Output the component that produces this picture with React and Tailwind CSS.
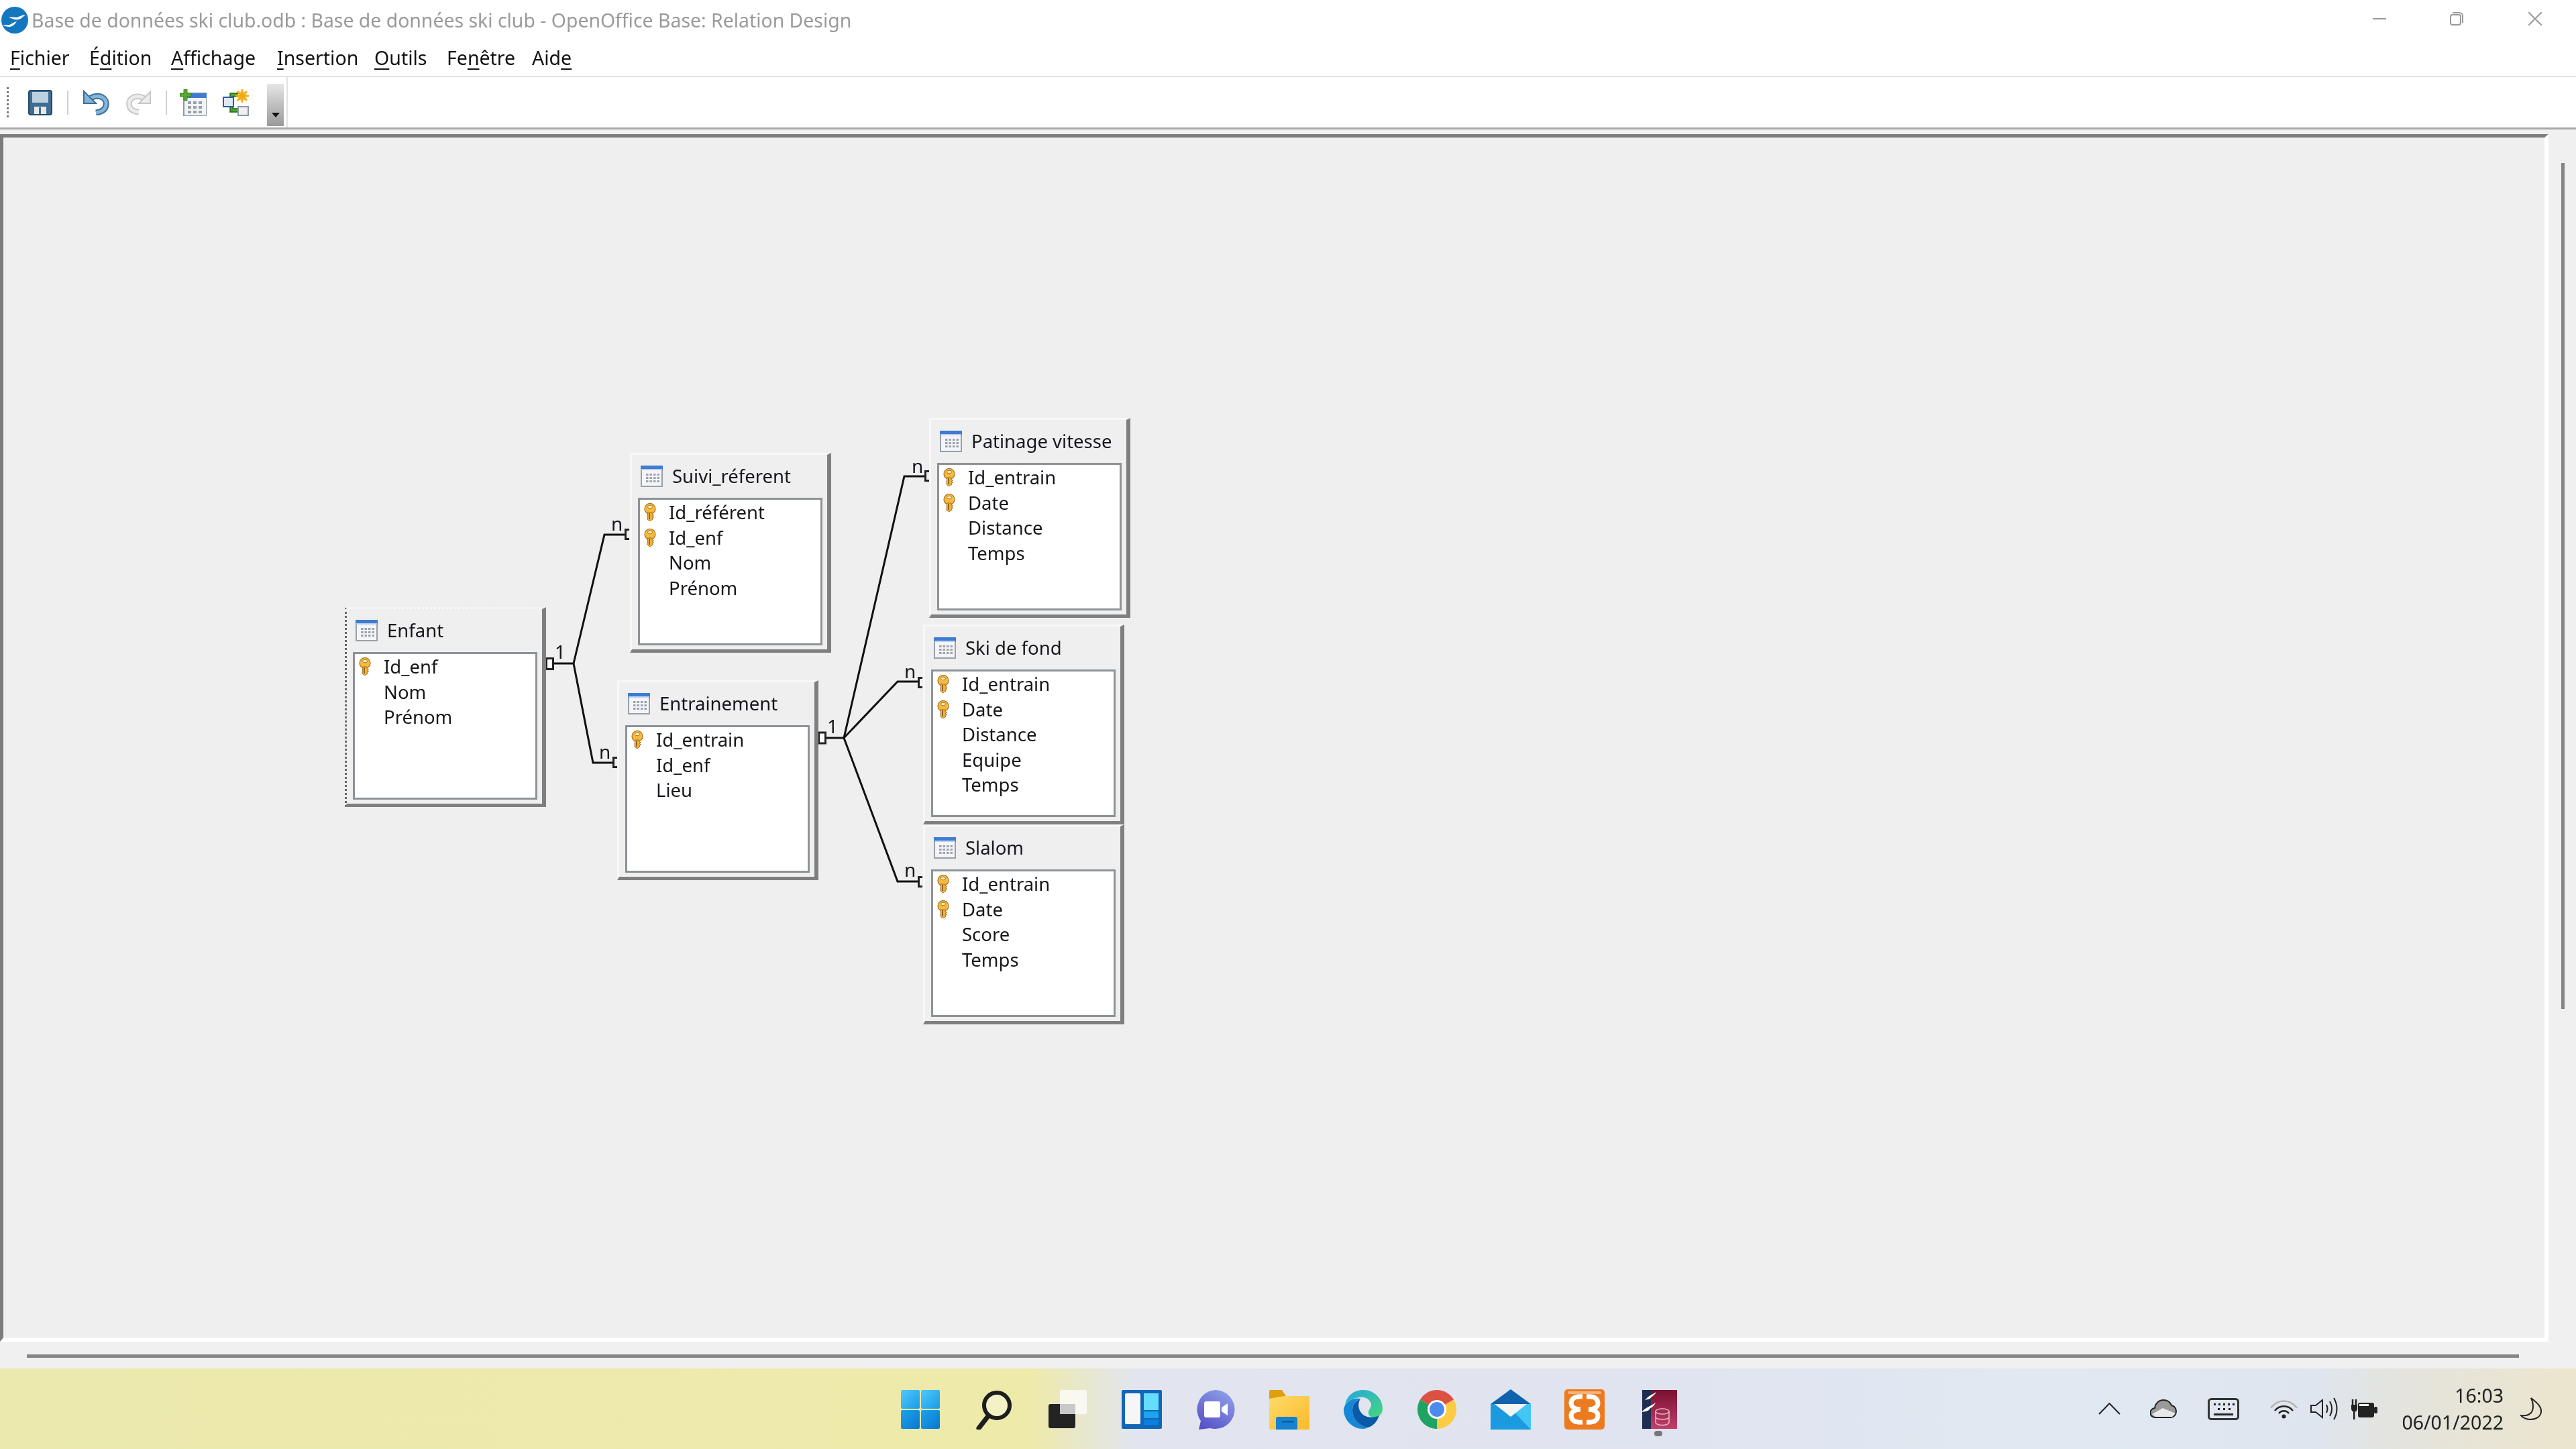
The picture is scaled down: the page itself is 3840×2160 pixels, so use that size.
import React from "react";

const TABLES = [
  { name: "Enfant", x: 515, y: 906, selected: true, rows: [["Id_enf", 1], ["Nom"], ["Prénom"]] },
  { name: "Suivi_réferent", x: 940, y: 676, rows: [["Id_référent", 1], ["Id_enf", 1], ["Nom"], ["Prénom"]] },
  { name: "Entrainement", x: 921, y: 1015, rows: [["Id_entrain", 1], ["Id_enf"], ["Lieu"]] },
  { name: "Patinage vitesse", x: 1386, y: 624, rows: [["Id_entrain", 1], ["Date", 1], ["Distance"], ["Temps"]] },
  { name: "Ski de fond", x: 1377, y: 932, rows: [["Id_entrain", 1], ["Date", 1], ["Distance"], ["Equipe"], ["Temps"]] },
  { name: "Slalom", x: 1377, y: 1230, rows: [["Id_entrain", 1], ["Date", 1], ["Score"], ["Temps"]] },
];

const Key = () => (
  <svg width="18" height="27" viewBox="0 0 18 27" className="shrink-0">
    <circle cx="9" cy="8.500" r="8" fill="#f6b93f" stroke="#a8701a" strokeWidth="1.200" />
    <path d="M5.500 14h6.500v2.500L14.500 18 12 19.500l2.500 1.500-2.500 1.500 1 1.500-4.500 3-3.500-3Z" fill="#f4b23a" stroke="#a8701a" strokeWidth="1" />
    <ellipse cx="9" cy="5.500" rx="3.500" ry="2.300" fill="#fff3c8" stroke="#a9741c" strokeWidth="1" />
    <path d="M8 15v9" stroke="#8a5e1a" strokeWidth="1.800" />
  </svg>
);

const TableIcon = () => (
  <svg width="33" height="32" viewBox="0 0 33 32" className="shrink-0">
    <rect x="1" y="1" width="31" height="30" fill="#f5f5f8" stroke="#97a0aa" strokeWidth="2" />
    <rect x="0" y="0" width="33" height="7" fill="#3f7bd1" />
    <rect x="1" y="5" width="31" height="2" fill="#bcd0ec" />
    {[8, 13.5, 19, 24.5].map((x) =>
      [12, 17, 22].map((y) => <rect key={x + "-" + y} x={x} y={y} width="3.500" height="3" fill="#9aa3ad" />)
    )}
  </svg>
);

function DbTable({ t }) {
  return (
    <div
      className={
        "absolute w-[300px] h-[298px] border-t-[3px] border-l-[3px] border-r-[6px] border-b-[5px] border-t-[#f8f8f8] border-r-[#7f7f7f] border-b-[#7f7f7f] bg-[#efefef] " +
        (t.selected ? "border-l-[#666666] [border-left-style:dotted] [border-top-style:dotted]" : "border-l-[#f8f8f8]")
      }
      style={{ left: t.x - 6, top: t.y - 206 }}
    >
      <div className="h-[64px] flex items-center pl-[13px] gap-[14px] text-[27.500px] text-[#16161c]">
        <TableIcon />
        <span>{t.name}</span>
      </div>
      <div className="ml-[9px] w-[275px] h-[220px] bg-white border-[3px] border-[#8d9297]">
        {t.rows.map(([label, k]) => (
          <div key={label} className="h-[37.500px] flex items-center pl-[6px] gap-[19px] text-[27.500px] text-[#16161c]">
            {k ? <Key /> : <span className="w-[18px] shrink-0" />}
            <span>{label}</span>
          </div>
        ))}
      </div>
    </div>
  );
}

const LINKS = [
  "M824 989H855L901 797H931",
  "M855 989L884 1137H913",
  "M1230 1100H1258L1348 710H1378",
  "M1258 1100L1338 1016H1368",
  "M1258 1100L1338 1314H1368",
];

function Relations() {
  const labels = [
    ["1", 827, 982], ["n", 911, 791], ["n", 893, 1131],
    ["1", 1233, 1093], ["n", 1359, 705], ["n", 1348, 1011], ["n", 1348, 1307],
  ];
  const brackets = [[931, 788, 17], [913, 1128, 17], [1378, 701, 17], [1368, 1009, 17], [1368, 1306, 17]];
  return (
    <svg className="absolute left-0 top-0" width="1800" height="1600" fill="none">
      <g transform="translate(-5 -205)">
        {LINKS.map((d) => <path key={d} d={d} stroke="#111" strokeWidth="3" />)}
        <rect x="814.500" y="981.500" width="10" height="16" fill="#fff" stroke="#222" strokeWidth="3" />
        <rect x="1220.500" y="1092" width="10" height="16" fill="#fff" stroke="#222" strokeWidth="3" />
        {brackets.map(([x, y, h]) => (
          <path key={x + "" + y} d={`M${x + 7} ${y + 1.5}H${x + 1.5}V${y + h - 1.5}H${x + 7}`} stroke="#222" strokeWidth="3" />
        ))}
        {labels.map(([l, x, y], i) => (
          <text key={i} x={x} y={y} fontSize="28" fill="#16161c" fontFamily="'Noto Sans', sans-serif">{l}</text>
        ))}
      </g>
    </svg>
  );
}

const U = ({ children }) => <span className="underline underline-offset-[5px]">{children}</span>;

const MENU = [
  { x: 15, w: 88, c: <><U>F</U>ichier</> },
  { x: 133, w: 91, c: <>É<U>d</U>ition</> },
  { x: 255, w: 128, c: <><U>A</U>ffichage</> },
  { x: 413, w: 113, c: <><U>I</U>nsertion</> },
  { x: 558, w: 76, c: <><U>O</U>utils</> },
  { x: 666, w: 97, c: <>Fe<U>n</U>être</> },
  { x: 793, w: 59, c: <>Aid<U>e</U></> },
];

const Win = () => (
  <svg width="60" height="60" viewBox="0 0 60 60">
    <defs>
      <linearGradient id="w1" x1="0" y1="0" x2="1" y2="1"><stop offset="0" stopColor="#4fc8fb" /><stop offset="1" stopColor="#1a9be6" /></linearGradient>
      <linearGradient id="w2" x1="0" y1="0" x2="1" y2="1"><stop offset="0" stopColor="#1ea3ea" /><stop offset="1" stopColor="#0878d0" /></linearGradient>
    </defs>
    <rect x="1" y="1" width="28" height="28" rx="2" fill="url(#w1)" />
    <rect x="31" y="1" width="28" height="28" rx="2" fill="url(#w1)" />
    <rect x="1" y="31" width="28" height="28" rx="2" fill="url(#w2)" />
    <rect x="31" y="31" width="28" height="28" rx="2" fill="url(#w2)" />
  </svg>
);
const Search = () => (
  <svg width="60" height="60" viewBox="0 0 60 60" fill="none" stroke="#1d1d1d">
    <circle cx="34" cy="24" r="19" strokeWidth="6" fill="#ffffff55" />
    <path d="M21 40L7 58" strokeWidth="7" strokeLinecap="round" />
  </svg>
);
const TaskView = () => (
  <svg width="60" height="60" viewBox="0 0 60 60">
    <rect x="1" y="22" width="40" height="36" rx="3" fill="#232323" />
    <rect x="18" y="1" width="40" height="36" rx="3" fill="#ffffff" fillOpacity=".72" />
    <rect x="18" y="22" width="23" height="15" fill="#c8c8c8" />
  </svg>
);
const Widgets = () => (
  <svg width="60" height="60" viewBox="0 0 60 60">
    <rect width="60" height="58" y="1" rx="2" fill="#1266b8" />
    <rect x="5" y="6" width="23" height="46" rx="2" fill="#f6f6f6" />
    <rect x="33" y="6" width="22" height="25" fill="#66dcff" />
    <rect x="33" y="33" width="22" height="10" fill="#1ca4f0" />
    <rect x="33" y="45" width="22" height="8" fill="#0a80e0" />
  </svg>
);
const Chat = () => (
  <svg width="60" height="60" viewBox="0 0 60 60">
    <defs><linearGradient id="c1" x1=".8" y1="0" x2=".2" y2="1"><stop offset="0" stopColor="#8ea0e8" /><stop offset="1" stopColor="#5750c8" /></linearGradient></defs>
    <path d="M30 1a29 29 0 1 1-8 57l-17 2 3-13A29 29 0 0 1 30 1Z" fill="url(#c1)" />
    <rect x="13" y="18" width="24" height="24" rx="3" fill="#fff" />
    <path d="M39 27l9-6v18l-9-6Z" fill="#fff" />
  </svg>
);
const Folder = () => (
  <svg width="60" height="60" viewBox="0 0 60 60">
    <defs><linearGradient id="f1" x1="0" y1="0" x2="1" y2="1"><stop offset="0" stopColor="#ffdb6c" /><stop offset="1" stopColor="#fbb927" /></linearGradient></defs>
    <path d="M0 3a2 2 0 0 1 2-2h17l6 9-2 4H0Z" fill="#dea00d" />
    <path d="M0 14L23 10h35a2 2 0 0 1 2 2v46a2 2 0 0 1-2 2H2a2 2 0 0 1-2-2Z" fill="url(#f1)" />
    <path d="M10 60V44a3 3 0 0 1 3-3h26a3 3 0 0 1 3 3v16Z" fill="#1782cf" />
    <rect x="19" y="47" width="18" height="2.500" fill="#0b5c9e" />
  </svg>
);
const Edge = () => (
  <svg width="60" height="60" viewBox="0 0 60 60">
    <defs><linearGradient id="e1" x1="0" y1="0" x2="1" y2="1"><stop offset="0" stopColor="#26a6e0" /><stop offset="1" stopColor="#45d97a" /></linearGradient></defs>
    <path d="M3 24C5 10 16 1 30 1c17 0 29 13 29 28 0 8-6 13-13 13-6 0-9-4-8-9 2-5 4-6 4-11-2-8-10-11-17-10C14 13 6 18 3 24Z" fill="url(#e1)" />
    <path d="M3 24c5-8 15-12 23-10-8 2-12 10-12 17 0 13 10 24 23 26-3 1.500-5 2-7 2C14 59 1 46 1 30c0-2 1-4 2-6Z" fill="#1487d6" />
    <path d="M37 57C24 55 14 44 14 31c0-7 4-14 12-17-4 6-4 16 2 22 6 7 18 7 26 3-4 11-10 16-17 18Z" fill="#0b5aa8" />
  </svg>
);
const Chrome = () => (
  <svg width="60" height="60" viewBox="0 0 60 60">
    <path d="M30 30L4.900 15.500A29 29 0 0 1 55.100 15.500Z" fill="#dd5144" />
    <path d="M30 30L55.100 15.500A29 29 0 0 1 30 59Z" fill="#fbcb43" />
    <path d="M30 30L30 59A29 29 0 0 1 4.900 15.500Z" fill="#1ea362" />
    <circle cx="30" cy="30" r="14" fill="#fff" />
    <circle cx="30" cy="30" r="11" fill="#4b8bf0" />
  </svg>
);
const Mail = () => (
  <svg width="60" height="60" viewBox="0 0 60 60">
    <path d="M0 22L30 0l30 22v8H0Z" fill="#0f62ad" />
    <rect y="22" width="60" height="38" fill="#1c9ae0" />
    <path d="M60 22v38L24 22Z" fill="#42c6f6" />
    <path d="M6 22h48L30 41Z" fill="#f4f4f4" />
  </svg>
);
const Xampp = () => (
  <svg width="60" height="60" viewBox="0 0 60 60" fill="none">
    <rect width="60" height="60" rx="5" fill="#ec7a1f" />
    <rect x="5" y="3" width="50" height="4" rx="2" fill="#f6b27a" />
    <path d="M27 11C14 10 10 15 10 21c0 5 5 9 14 9-9 0-14 4-14 9 0 6 4 11 17 10M33 11c13-1 17 4 17 10 0 5-5 9-14 9 9 0 14 4 14 9 0 6-4 11-17 10" stroke="#fff" strokeWidth="7" />
  </svg>
);
const Base = () => (
  <svg width="60" height="60" viewBox="0 0 60 60" fill="none">
    <defs><linearGradient id="b1" x1="0" y1="0" x2="0" y2="1"><stop offset="0" stopColor="#7a1030" /><stop offset="1" stopColor="#c0406a" /></linearGradient></defs>
    <path d="M6 1h52v58H6Z" fill="url(#b1)" />
    <path d="M6 1h13v58H6Z" fill="#1f2e50" />
    <path d="M10 16c5-6 11-8 17-12-2 4-5 6-8 8 0 2-4 3-9 4ZM5 34c6-7 14-9 21-14-3 6-6 7-9 9 0 3-6 4-12 5Z" fill="#fff" />
    <g stroke="#e6b8c8" strokeWidth="1.500">
      <ellipse cx="36" cy="33" rx="10" ry="4" />
      <path d="M26 33v16c0 6 20 6 20 0V33M26 41c0 5 20 5 20 0" />
    </g>
  </svg>
);

const TASK = [Win, Search, TaskView, Widgets, Chat, Folder, Edge, Chrome, Mail, Xampp, Base];

export default function App() {
  return (
    <div className="relative w-[3840px] h-[2160px] flex flex-col overflow-hidden bg-[#f0f0f0] font-['Noto_Sans',sans-serif] blur-[0.6px]">
      {/* title bar */}
      <div className="h-[60px] shrink-0 bg-white flex items-center">
        <svg width="42" height="42" viewBox="0 0 42 42" className="ml-[1px] shrink-0">
          <circle cx="21" cy="21" r="20" fill="#1377c0" />
          <path d="M12 16c4 0 8 1 12 1 4-1 8-4 13-4-4 3-6 6-10 7-6 1-11-1-15-4Z" fill="#fff" />
          <path d="M3 28c4 0 7 1 10 0 3-1 6-4 11-5-3 4-6 8-11 8-4 0-7-1-10-3Z" fill="#fff" />
        </svg>
        <span className="ml-[4px] text-[28.400px] text-[#9a9a9a] whitespace-nowrap">Base de données ski club.odb : Base de données ski club - OpenOffice Base: Relation Design</span>
        <div className="ml-auto flex items-center pr-[51px] mb-[4px]">
          <svg width="20" height="20" viewBox="0 0 20 20" fill="none" stroke="#999" strokeWidth="2"><path d="M0 10H20" /></svg>
          <svg width="20" height="20" viewBox="0 0 20 20" fill="none" stroke="#999" strokeWidth="2" className="ml-[95px]"><rect x="1" y="4" width="15" height="15" rx="3" /><path d="M4 1h10a5 5 0 0 1 5 5v10" /></svg>
          <svg width="20" height="20" viewBox="0 0 20 20" fill="none" stroke="#999" strokeWidth="2" className="ml-[97px]"><path d="M0 0L20 20M20 0L0 20" /></svg>
        </div>
      </div>
      {/* menu */}
      <div className="h-[55px] shrink-0 bg-white border-b-[2px] border-[#e4e4e4] flex items-center text-[28.500px] text-[#111]">
        <div className="flex pb-[1px]">
          {MENU.map((m, i) => (
            <span key={i} className="whitespace-nowrap shrink-0" style={{ marginLeft: i === 0 ? m.x : m.x - MENU[i - 1].x - MENU[i - 1].w, width: m.w }}>
              {m.c}
            </span>
          ))}
        </div>
      </div>
      {/* toolbar */}
      <div className="h-[78px] shrink-0 bg-white border-b-[3px] border-[#a8a8a8] flex items-center">
        <div className="ml-[10px] h-[45px] w-[3px] border-l-[3px] border-dotted border-[#777]" />
        <svg width="36" height="38" viewBox="0 0 36 38" className="ml-[29px]">
          <rect x="1" y="1" width="34" height="36" rx="3" fill="#3f6d92" stroke="#234a6b" strokeWidth="2" />
          <rect x="6" y="3" width="24" height="16" fill="#bcd0e0" />
          <rect x="9" y="25" width="18" height="11" fill="#e4e8ec" />
          <rect x="16" y="26" width="3" height="10" fill="#3f6d92" />
        </svg>
        <div className="ml-[22px] w-[2px] h-[36px] bg-[#d0d0d0]" />
        <svg width="42" height="38" viewBox="0 0 42 38" fill="none" className="ml-[21px]">
          <path d="M12 12C26 5 37 13 35 23 34 30 27 33 20 34" stroke="#3d6f9a" strokeWidth="9" />
          <path d="M12 12C26 5 37 13 35 23 34 30 27 33 20 34" stroke="#86b4d8" strokeWidth="5" />
          <path d="M2 2v18h18Z" fill="#86b4d8" stroke="#3d6f9a" strokeWidth="2" />
        </svg>
        <svg width="40" height="38" viewBox="0 0 42 38" fill="none" className="ml-[21px]">
          <path d="M30 12C16 5 5 13 7 23 8 30 15 33 22 34" stroke="#c6c6c6" strokeWidth="9" />
          <path d="M30 12C16 5 5 13 7 23 8 30 15 33 22 34" stroke="#ececec" strokeWidth="5" />
          <path d="M40 2v18H22Z" fill="#ececec" stroke="#c6c6c6" strokeWidth="2" />
        </svg>
        <div className="ml-[21px] w-[2px] h-[36px] bg-[#d0d0d0]" />
        <svg width="40" height="40" viewBox="0 0 40 40" className="ml-[19px]">
          <rect x="6" y="6" width="34" height="34" fill="#f2f3f5" stroke="#8e98a2" strokeWidth="2" />
          <rect x="6" y="6" width="34" height="7" fill="#3f7bd1" />
          {[12, 20, 28].map((x) => [18, 25, 32].map((y) => <rect key={x + "-" + y} x={x} y={y} width="5" height="4" fill="#98a1ab" />))}
          <path d="M6 0h5v6h6v5h-6v6H6v-6H0V6h6Z" fill="#58a834" stroke="#2e7a18" strokeWidth=".8" />
        </svg>
        <svg width="40" height="40" viewBox="0 0 40 40" className="ml-[23px]">
          <path d="M12 6h16v5H16v18h8v5H12Z" fill="#4ea62e" stroke="#1f6b14" strokeWidth="1.500" />
          <rect x="2" y="12" width="15" height="14" fill="#dfe8f4" stroke="#2b5d9a" strokeWidth="2" />
          <rect x="24" y="26" width="15" height="13" fill="#eef0f2" stroke="#8e98a2" strokeWidth="2" />
          <circle cx="30" cy="10" r="7" fill="#ffd23c" />
          <path d="M30 0v20M20 10h20M23 3l14 14M37 3L23 17" stroke="#f2a81a" strokeWidth="2.500" />
        </svg>
        <div className="ml-[27px] w-[25px] h-[63px] mt-[7px] bg-gradient-to-b from-[#e6e6e6] to-[#9a9a9a] flex items-end justify-center pb-[13px]">
          <div className="w-0 h-0 border-x-[6px] border-t-[7px] border-x-transparent border-t-[#111]" />
        </div>
        <div className="ml-[4px] w-[2px] h-full bg-[#e2e2e2]" />
      </div>
      {/* workspace */}
      <div className="h-[1807px] shrink-0 flex pt-[7px]">
        <div className="relative w-[3799px] h-full shrink-0 border-t-[5px] border-l-[5px] border-r-[6px] border-b-[6px] border-t-[#7b7b7b] border-l-[#7b7b7b] border-r-white border-b-white bg-[#efefef] overflow-hidden">
          <Relations />
          {TABLES.map((t) => <DbTable key={t.name} t={t} />)}
        </div>
        <div className="ml-[19px] mt-[43px] w-[5px] h-[1261px] bg-[#858585]" />
      </div>
      {/* horizontal scrollbar */}
      <div className="h-[40px] shrink-0 pl-[40px] pt-[19px]">
        <div className="w-[3715px] h-[5px] bg-[#858585]" />
      </div>
      {/* taskbar */}
      <div className="h-[120px] shrink-0 flex items-center bg-[linear-gradient(90deg,#ece9ae_0%,#eeeaaa_40%,#e2e5ee_44%,#e0e4f0_65%,#e0e9f2_80%,#dfe5ef_90%,#e4e4de_93%,#ece5cd_100%)] text-[28.500px] text-[#222]">
        <div className="ml-[1342px] flex gap-[50px] pt-[2px]">
          {TASK.map((Icon, i) => (
            <div key={i} className="relative w-[60px] h-[60px]">
              <Icon />
              {i === 10 && <div className="absolute left-[24px] top-[62px] w-[12px] h-[8px] rounded-full bg-[#777]" />}
            </div>
          ))}
        </div>
        <div className="ml-[626px] flex items-center">
          <svg width="33" height="18" viewBox="0 0 33 18" fill="none" stroke="#222" strokeWidth="2"><path d="M1 17L16.500 1 32 17" /></svg>
          <svg width="40" height="28" viewBox="0 0 40 28" className="ml-[44px]">
            <path d="M8 27a7 7 0 0 1-1-14c1-7 6-12 13-12 6 0 10 3 12 8 4 1 7 4 7 9s-4 9-8 9Z" fill="#9a9a9a" stroke="#222" strokeWidth="2" />
            <path d="M3 22l16-9 19 8-5 5H8Z" fill="#e8e8e8" />
          </svg>
          <svg width="47" height="33" viewBox="0 0 47 33" fill="none" className="ml-[46px]">
            <rect x="1.500" y="1.500" width="44" height="30" rx="4" stroke="#333" strokeWidth="3" />
            {[10, 17, 24, 31, 38].map((x) => <rect key={x} x={x - 1} y="8" width="3" height="3" fill="#222" />)}
            {[15, 23, 31].map((x) => <rect key={x} x={x} y="15" width="3" height="3" fill="#222" />)}
            <rect x="9" y="23" width="29" height="3" fill="#222" />
          </svg>
          <svg width="41" height="29" viewBox="0 0 41 29" fill="none" className="ml-[46px]">
            <path d="M1 13C11 -1 30 -1 40 13" stroke="#b4b4b4" strokeWidth="2.500" />
            <path d="M7 17C14 8 27 8 34 17M13 21c4-5 11-5 15 0" stroke="#222" strokeWidth="2.500" />
            <circle cx="20.500" cy="25.500" r="3" fill="#222" />
          </svg>
          <svg width="41" height="34" viewBox="0 0 41 34" fill="none" stroke="#222" strokeWidth="2" className="ml-[19px]">
            <path d="M1 12v10h7l10 8V4L8 12Z" />
            <path d="M24 11c2 4 2 8 0 12M29 6c4 7 4 15 0 22M35 1c6 10 6 22 0 32" />
          </svg>
          <svg width="40" height="31" viewBox="0 0 40 31" className="ml-[20px]">
            <path d="M2 1v8M7 1v8" stroke="#222" strokeWidth="2.500" />
            <path d="M0 9h9v6a4 4 0 0 1-9 0Z" fill="#222" />
            <rect x="3" y="18" width="2.500" height="13" fill="#222" />
            <rect x="10" y="6" width="24" height="22" rx="3" fill="#222" />
            <rect x="34" y="12" width="5" height="10" rx="2" fill="#222" />
            <path d="M12 8h14v3H12Z" fill="#eee" />
          </svg>
          <div className="ml-[27px] w-[160px] text-right leading-[40px] whitespace-nowrap">
            <div>16:03</div>
            <div>06/01/2022</div>
          </div>
          <svg width="32" height="34" viewBox="0 0 32 34" fill="none" stroke="#222" strokeWidth="2" className="ml-[25px]">
            <path d="M16 1c9 7 16 13 15 21-1 7-8 11-16 11-6 0-12-3-14-6 6 1 11 0 15-4 4-5 4-14 0-22Z" />
          </svg>
        </div>
      </div>
    </div>
  );
}
